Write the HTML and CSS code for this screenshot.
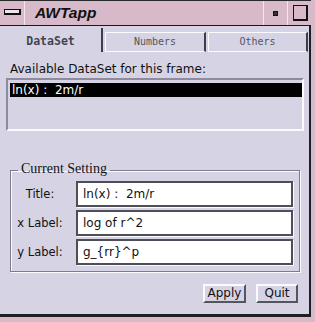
FILE: index.html
```html
<!DOCTYPE html>
<html>
<head>
<meta charset="utf-8">
<link rel="stylesheet" href="styles.css">
</head>
<body>
<div class="win">
  <div class="titlebar">
    <div class="menu-btn"><span class="bar"></span></div>
    <div class="title">AWTapp</div>
    <div class="min-btn"><span class="dot"></span></div>
    <div class="max-btn"><span class="sq"></span></div>
  </div>
  <div class="main">
    <div class="tabs">
      <div class="tab active">DataSet</div>
      <div class="tab t2">Numbers</div>
      <div class="tab t3">Others</div>
    </div>
    <div class="panel">
      <div class="avail">Available DataSet for this frame:</div>
      <div class="list"><div class="item sel">ln(x) :&nbsp; 2m/r</div></div>
      <fieldset class="group">
        <legend>Current Setting</legend>
        <div class="row"><span class="lbl">Title:</span><div class="field">ln(x) :&nbsp; 2m/r</div></div>
        <div class="row"><span class="lbl">x Label:</span><div class="field">log of r^2</div></div>
        <div class="row"><span class="lbl">y Label:</span><div class="field">g_{rr}^p</div></div>
      </fieldset>
      <div class="buttons">
        <div class="btn apply">Apply</div>
        <div class="btn quit">Quit</div>
      </div>
    </div>
  </div>
</div>
</body>
</html>
```
FILE: styles.css
```css
* { box-sizing: border-box; }
html, body { margin: 0; padding: 0; }
body {
  width: 315px;
  height: 322px;
  overflow: hidden;
  background: #d7b9ca;
  font-family: "DejaVu Sans", sans-serif;
  color: #000;
}
.win {
  width: 315px;
  height: 322px;
  display: flex;
  flex-direction: column;
}
.titlebar {
  width: 311px;
  height: 26px;
  display: flex;
  border-top: 1px solid #2a2a2a;
  border-bottom: 1px solid #1a1a1a;
  background: #d7b9ca;
}
.menu-btn {
  width: 25px;
  border-right: 1px solid #f2e6ec;
  display: flex;
  padding: 8px 0 0 4px;
}
.bar {
  width: 17px;
  height: 6px;
  border: 1px solid #111;
  border-width: 1px 2px 2px 1px;
  background: #efe2e9;
}
.title {
  flex: 1;
  padding-left: 10px;
  font-family: "Liberation Sans", sans-serif;
  font-weight: bold;
  font-style: italic;
  font-size: 15.5px;
  line-height: 24px;
  color: #111;
}
.min-btn {
  width: 24px;
  border-left: 1px solid #f2e6ec;
  padding: 10px 0 0 9px;
}
.dot {
  display: block;
  width: 5px;
  height: 5px;
  border: 1px solid #111;
  background: #333;
}
.max-btn {
  width: 24px;
  border-left: 1px solid #f2e6ec;
  padding: 4px 0 0 5px;
}
.sq {
  display: block;
  width: 15px;
  height: 16px;
  border: 1px solid #111;
  border-width: 1px 2px 2px 1px;
}
.main {
  width: 311px;
  height: 291px;
  background: #d6d4e4;
  border-right: 2px solid #1e1e24;
  border-bottom: 3px solid #1e1e24;
  display: flex;
  flex-direction: column;
}
.tabs {
  display: flex;
  height: 26px;
}
.tab {
  display: flex;
  justify-content: center;
  font-family: "DejaVu Sans Mono", monospace;
}
.tab.active {
  width: 103px;
  margin-top: 2px;
  height: 24px;
  border-right: 2px solid #3e3e48;
  font-weight: bold;
  font-size: 11.5px;
  color: #444450;
  padding-top: 6px;
}
.t2, .t3 {
  margin-top: 6px;
  height: 20px;
  border-top: 1px solid #fbfbff;
  border-left: 1px solid #fbfbff;
  border-bottom: 1px solid #fbfbff;
  border-right: 2px solid #3e3e48;
  font-size: 10px;
  color: #555560;
  padding-top: 3px;
}
.t2 { margin-left: 2px; width: 101px; }
.t3 { margin-left: 2px; width: 100px; }
.panel {
  flex: 1;
  display: flex;
  flex-direction: column;
}
.avail {
  margin: 10px 0 0 10px;
  font-size: 12px;
  line-height: 14px;
  color: #111;
}
.list {
  margin: 2px 0 0 6px;
  width: 298px;
  height: 53px;
  border: 2px solid;
  border-color: #8e8c9c #fbfbff #fbfbff #8e8c9c;
  padding: 3px 0 0 2px;
}
.item.sel {
  background: #000;
  color: #fff;
  font-size: 12px;
  line-height: 14px;
  padding-left: 2px;
  white-space: pre;
}
.group {
  margin: 31px 0 0 10px;
  width: 290px;
  padding: 3px 6px 6px 1px;
  border: 1px solid #7e7c8c;
  box-shadow: inset 1px 1px 0 #fbfbff, 1px 1px 0 #fbfbff;
  display: flex;
  flex-direction: column;
  gap: 3px;
}
.group legend {
  margin-left: 6px;
  padding: 0 3px 2px;
  font-family: "Liberation Serif", serif;
  font-size: 14px;
  line-height: 14px;
  color: #111;
}
.row {
  display: flex;
  align-items: center;
}
.lbl {
  width: 56px;
  margin-right: 8px;
  text-align: center;
  font-size: 11.5px;
  color: #111;
}
.field {
  flex: 1;
  height: 26px;
  background: #fff;
  border: 2px solid #4e4e58;
  box-shadow: 1px 1px 0 #fbfbff;
  padding-left: 5px;
  font-size: 12px;
  line-height: 22px;
  white-space: pre;
  color: #111;
}
.buttons {
  display: flex;
  justify-content: flex-end;
  gap: 10px;
  margin: 12px 11px 0 0;
}
.btn {
  height: 19px;
  border: 2px solid;
  border-color: #fbfbff #55555f #55555f #fbfbff;
  font-size: 12px;
  line-height: 15px;
  text-align: center;
  color: #111;
}
.apply { width: 43px; }
.quit { width: 42px; }
```
